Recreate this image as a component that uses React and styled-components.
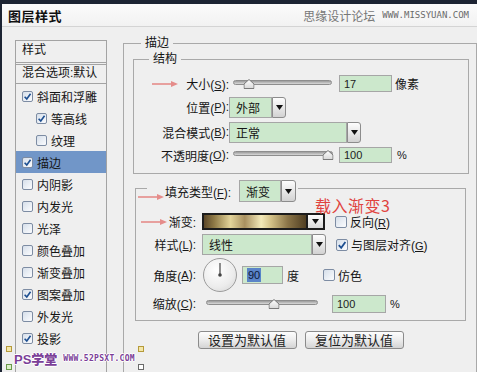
import React from "react";
import styled, { createGlobalStyle } from "styled-components";

const GlobalStyle = createGlobalStyle`
  html, body {
    margin: 0;
    padding: 0;
    background: #efefef;
  }
  body {
    font-family: "Liberation Sans", "Noto Sans CJK SC", sans-serif;
    font-size: 12px;
    color: #151515;
  }
`;

const Window = styled.div`
  position: relative;
  width: 477px;
  height: 372px;
  overflow: hidden;
  box-sizing: border-box;
  border-top: 4px solid #1d2433;
  border-left: 2px solid #1d2433;
  background: #efefef;
`;

const TitleBar = styled.div`
  height: 22px;
  display: flex;
  align-items: center;
  justify-content: space-between;
  padding: 0 8px 0 6px;
  background: linear-gradient(#fbfbfb, #f2f2f2);
  border-bottom: 1px solid #d4d4d4;
`;

const Title = styled.h1`
  margin: 0;
  font-size: 13px;
  font-weight: 700;
  color: #111;
  letter-spacing: 0.5px;
`;

const SiteMark = styled.div`
  display: flex;
  align-items: center;
  gap: 7px;
  color: #777;
  font-size: 12px;
  span {
    font-family: "DejaVu Sans Mono", monospace;
    font-size: 9px;
    color: #6a6a6a;
  }
`;

const Content = styled.div`
  display: flex;
  align-items: flex-start;
`;

const Sidebar = styled.div`
  width: 92px;
  height: 360px;
  margin: 13px 0 0 13px;
  border: 1px solid #a3a3a3;
  box-sizing: border-box;
  flex: none;
`;

const SideHeader = styled.div`
  height: 21px;
  line-height: 19px;
  padding-left: 6px;
  border-bottom: 3px double #a3a3a3;
`;

const SideBlend = styled.div`
  height: 18px;
  line-height: 16px;
  padding-left: 6px;
  border-bottom: 1px solid #a3a3a3;
  margin-bottom: 1px;
  white-space: nowrap;
`;

const SideItem = styled.div`
  height: 22px;
  display: flex;
  align-items: center;
  gap: 4px;
  padding-left: ${(p) => (p.$indent ? 20 : 6)}px;
  background: ${(p) => (p.$active ? "#7196c8" : "transparent")};
  white-space: nowrap;
`;

const Box = styled.span`
  width: ${(p) => p.$size}px;
  height: ${(p) => p.$size}px;
  box-sizing: border-box;
  border: 1px solid #7d8ca3;
  border-radius: 2px;
  background: linear-gradient(135deg, #d6dfea, #fbfcfe);
  display: inline-flex;
  align-items: center;
  justify-content: center;
  flex: none;
  margin-left: ${(p) => p.$ml || 0}px;
`;

const Check = ({ checked, size = 11, ml }) => (
  <Box $size={size} $ml={ml}>
    {checked && (
      <svg width={size - 2} height={size - 2} viewBox="0 0 10 10">
        <path d="M1.8 5.2 L4.2 7.8 L8.4 2" stroke="#1d4f91" strokeWidth="1.8" fill="none" />
      </svg>
    )}
  </Box>
);

const Outer = styled.fieldset`
  margin: 8px 0 0 16px;
  padding: 0 0 40px 9px;
  width: 370px;
  min-width: 0;
  border: 1px solid #a9a9a9;
  box-sizing: border-box;
`;

const Legend = styled.legend`
  margin-left: ${(p) => p.$ml}px;
  padding: 0 4px;
  line-height: 16px;
`;

const Group = styled.fieldset`
  margin: 0 0 0 ${(p) => p.$ml || 0}px;
  padding: 0 0 ${(p) => p.$pb}px 0;
  width: ${(p) => p.$w}px;
  min-width: 0;
  border: 1px solid #a9a9a9;
  box-sizing: border-box;
`;

const FillLegend = styled.legend`
  margin-left: 11px;
  padding: 6px 2px 0 18px;
`;

const LegendRow = styled.div`
  display: flex;
  align-items: center;
  height: 22px;
  gap: 8px;
`;

const Rows = styled.div`
  padding-top: ${(p) => p.$pt}px;
`;

const Row = styled.div`
  display: flex;
  align-items: center;
  height: ${(p) => p.$h}px;
  margin-top: ${(p) => p.$mt || 0}px;
`;

const Label = styled.label`
  width: ${(p) => p.$w}px;
  flex: none;
  display: flex;
  justify-content: flex-end;
  align-items: center;
  gap: ${(p) => p.$gap || 0}px;
  white-space: nowrap;
`;

const Key = styled.u`
  font-size: 11px;
  text-underline-offset: 1px;
`;

const Track = styled.div`
  position: relative;
  width: ${(p) => p.$w}px;
  height: 5px;
  margin: -3px 0 0 ${(p) => p.$ml}px;
  border: 1px solid #8d8d8d;
  border-radius: 3px;
  background: linear-gradient(#9b9b9b, #d9d9d9);
  box-sizing: border-box;
  flex: none;
`;

const ThumbSvg = styled.svg`
  position: absolute;
  top: -2px;
  left: ${(p) => p.$pos}%;
  transform: translateX(-50%);
`;

const Slider = ({ w, ml, pos }) => (
  <Track $w={w} $ml={ml}>
    <ThumbSvg $pos={pos} width="11" height="10" viewBox="0 0 11 10">
      <defs>
        <linearGradient id="tg" x1="0" y1="0" x2="0" y2="1">
          <stop offset="0" stopColor="#ffffff" />
          <stop offset="1" stopColor="#d8d8d8" />
        </linearGradient>
      </defs>
      <polygon points="5.5,0.5 10.5,5 10.5,9.5 0.5,9.5 0.5,5" fill="url(#tg)" stroke="#7a7a7a" />
    </ThumbSvg>
  </Track>
);

const Field = styled.div`
  width: ${(p) => p.$w}px;
  height: ${(p) => p.$h}px;
  margin-left: ${(p) => p.$ml || 0}px;
  border: 1px solid #a6a6a6;
  background: #cce8cc;
  box-sizing: border-box;
  display: flex;
  align-items: center;
  padding-left: 4px;
  font-size: 11px;
  color: #222;
  flex: none;
`;

const Selected = styled.span`
  background: #5a84c8;
  color: #0d1838;
  padding: 0 1px;
  line-height: 14px;
`;

const Unit = styled.span`
  margin-left: ${(p) => p.$ml}px;
  font-size: ${(p) => (p.$latin ? 11 : 12)}px;
`;

const SelectWrap = styled.div`
  display: flex;
  height: ${(p) => p.$h}px;
  margin-left: ${(p) => p.$ml || 0}px;
  flex: none;
`;

const SelectValue = styled.div`
  width: ${(p) => p.$w}px;
  box-sizing: border-box;
  border: 1px solid #a6a6a6;
  background: #cce8cc;
  display: flex;
  align-items: center;
  padding-left: 6px;
`;

const SelectButton = styled.div`
  width: ${(p) => p.$w || 14}px;
  box-sizing: border-box;
  border: 1px solid #8c8c8c;
  border-radius: 0 3px 3px 0;
  background: linear-gradient(#fdfdfd, #d2d2d2);
  display: flex;
  align-items: center;
  justify-content: center;
`;

const Caret = () => (
  <svg width="7" height="5" viewBox="0 0 7 5">
    <polygon points="0,0 7,0 3.5,5" fill="#111" />
  </svg>
);

const Select = ({ w, h = 21, ml, value, btn }) => (
  <SelectWrap $h={h} $ml={ml}>
    <SelectValue $w={w}>{value}</SelectValue>
    <SelectButton $w={btn}>
      <Caret />
    </SelectButton>
  </SelectWrap>
);

const GradientPicker = styled.div`
  display: flex;
  width: 123px;
  height: 17px;
  margin-left: 6px;
  border: 2px solid #1c1c1c;
  box-sizing: border-box;
  flex: none;
`;

const GradientSwatch = styled.div`
  flex: 1;
  background: linear-gradient(
    90deg,
    #5a4628 0%,
    #8f7a46 10%,
    #e3d49a 26%,
    #a89060 40%,
    #f3eab9 56%,
    #d2c086 66%,
    #8b7548 82%,
    #4f3e22 100%
  );
`;

const GradientButton = styled.div`
  width: 15px;
  border-left: 2px solid #1c1c1c;
  background: linear-gradient(#fdfdfd, #d8d8d8);
  display: flex;
  align-items: center;
  justify-content: center;
`;

const Toggle = styled.div`
  display: flex;
  align-items: center;
  gap: 3px;
  margin-left: ${(p) => p.$ml}px;
  white-space: nowrap;
`;

const Dial = styled.div`
  width: 34px;
  height: 34px;
  margin-left: 7px;
  border-radius: 50%;
  border: 1px solid #9c9c9c;
  box-sizing: border-box;
  background: radial-gradient(circle at 40% 35%, #ffffff, #ececec 60%, #d2d2d2);
  flex: none;
`;

const ButtonRow = styled.div`
  width: 331px;
  margin: 10px 0 0 2px;
  display: flex;
  justify-content: center;
  gap: 8px;
`;

const Button = styled.button`
  width: 99px;
  height: 18px;
  padding: 0;
  border: 1px solid #8b8b8b;
  border-radius: 3px;
  background: linear-gradient(#fdfdfd, #ececec 50%, #d4d4d4);
  font-family: "Noto Sans CJK SC", sans-serif;
  font-size: 13px;
  line-height: 16px;
  color: #222;
`;

const ArrowSvg = styled.svg`
  flex: none;
  position: ${(p) => (p.$x != null ? "absolute" : "static")};
  left: ${(p) => p.$x}px;
  top: ${(p) => p.$y}px;
`;

const Arrow = ({ x, y }) => (
  <ArrowSvg $x={x} $y={y} width="26" height="8" viewBox="0 0 26 8">
    <line x1="0" y1="4" x2="20" y2="4" stroke="#e58c8a" strokeWidth="1.6" />
    <polygon points="19,1 26,4 19,7" fill="#e58c8a" />
  </ArrowSvg>
);

const Note = styled.div`
  position: absolute;
  left: 313px;
  top: 193px;
  font-family: "Noto Sans CJK SC", sans-serif;
  font-size: 16px;
  line-height: 16px;
  color: #e0433e;
  letter-spacing: 0.5px;
`;

const Stamp = styled.div`
  position: absolute;
  left: 4px;
  top: 342px;
  width: 138px;
  height: 24px;
  display: flex;
  align-items: center;
  gap: 6px;
  padding-left: 8px;
  box-sizing: border-box;
  font-weight: 700;
  color: #7b3f98;
  text-shadow: -1px 0 #fff, 1px 0 #fff, 0 -1px #fff, 0 1px #fff;
  b {
    font-size: 13px;
  }
  span {
    font-family: "DejaVu Sans Mono", monospace;
    font-size: 8px;
    letter-spacing: 0.3px;
  }
`;

const Corner = styled.i`
  position: absolute;
  width: 4px;
  height: 4px;
  border: 1px solid ${(p) => p.$c};
  left: ${(p) => (p.$r ? "auto" : "0")};
  right: ${(p) => (p.$r ? "0" : "auto")};
  top: ${(p) => (p.$b ? "auto" : "0")};
  bottom: ${(p) => (p.$b ? "0" : "auto")};
  background: ${(p) => p.$bg};
`;

const layers = [
  { name: "斜面和浮雕", checked: true },
  { name: "等高线", checked: true, indent: true },
  { name: "纹理", indent: true },
  { name: "描边", checked: true, active: true },
  { name: "内阴影" },
  { name: "内发光" },
  { name: "光泽" },
  { name: "颜色叠加" },
  { name: "渐变叠加" },
  { name: "图案叠加", checked: true },
  { name: "外发光" },
  { name: "投影", checked: true },
];

export default function App() {
  return (
    <>
      <GlobalStyle />
      <Window>
        <TitleBar>
          <Title>图层样式</Title>
          <SiteMark>
            思缘设计论坛<span>WWW.MISSYUAN.COM</span>
          </SiteMark>
        </TitleBar>
        <Content>
          <Sidebar>
            <SideHeader>样式</SideHeader>
            <SideBlend>混合选项:默认</SideBlend>
            {layers.map((l) => (
              <SideItem key={l.name} $indent={l.indent} $active={l.active}>
                <Check checked={l.checked} />
                {l.name}
              </SideItem>
            ))}
          </Sidebar>

          <Outer>
            <Legend $ml={8}>描边</Legend>
            <Group $w={336} $pb={8}>
              <Legend $ml={15}>结构</Legend>
              <Rows $pt={6}>
                <Row $h={21}>
                  <Label $w={95} $gap={8}>
                    <Arrow />
                    <span>大小(<Key>S</Key>):</span>
                  </Label>
                  <Slider w={99} ml={4} pos={15} />
                  <Field $w={53} $h={17} $ml={7}>17</Field>
                  <Unit $ml={3}>像素</Unit>
                </Row>
                <Row $h={22} $mt={2}>
                  <Label $w={95}>位置(<Key>P</Key>):</Label>
                  <Select w={43} value="外部" />
                </Row>
                <Row $h={22} $mt={3}>
                  <Label $w={95}>混合模式(<Key>B</Key>):</Label>
                  <Select w={118} value="正常" />
                </Row>
                <Row $h={20} $mt={2}>
                  <Label $w={95}>不透明度(<Key>O</Key>):</Label>
                  <Slider w={100} ml={4} pos={96} />
                  <Field $w={53} $h={16} $ml={6}>100</Field>
                  <Unit $ml={5} $latin>%</Unit>
                </Row>
              </Rows>
            </Group>

            <Group $w={331} $ml={2} $pb={7}>
              <FillLegend>
                <LegendRow>
                  <span>填充类型(<Key>F</Key>):</span>
                  <Select w={42} h={22} btn={15} value="渐变" />
                </LegendRow>
              </FillLegend>
              <Rows $pt={11}>
                <Row $h={17}>
                  <Label $w={60} $gap={2}>
                    <Arrow />
                    <span>渐变:</span>
                  </Label>
                  <GradientPicker>
                    <GradientSwatch />
                    <GradientButton>
                      <Caret />
                    </GradientButton>
                  </GradientPicker>
                  <Toggle $ml={10}>
                    <Check size={12} />
                    <span>反向(<Key>R</Key>)</span>
                  </Toggle>
                </Row>
                <Row $h={21} $mt={4}>
                  <Label $w={60}>样式(<Key>L</Key>):</Label>
                  <Select w={110} ml={6} value="线性" />
                  <Toggle $ml={10}>
                    <Check size={12} checked />
                    <span>与图层对齐(<Key>G</Key>)</span>
                  </Toggle>
                </Row>
                <Row $h={36} $mt={2}>
                  <Label $w={60}>角度(<Key>A</Key>):</Label>
                  <Dial>
                    <svg width="32" height="32" viewBox="0 0 32 32">
                      <line x1="16" y1="16" x2="16" y2="4" stroke="#444" strokeWidth="1.2" />
                      <circle cx="16" cy="16" r="1.8" fill="#444" />
                    </svg>
                  </Dial>
                  <Field $w={41} $h={18} $ml={5}>
                    <Selected>90</Selected>
                  </Field>
                  <Unit $ml={4}>度</Unit>
                  <Toggle $ml={24}>
                    <Check size={12} />
                    仿色
                  </Toggle>
                </Row>
                <Row $h={19} $mt={1}>
                  <Label $w={60}>缩放(<Key>C</Key>):</Label>
                  <Slider w={112} ml={10} pos={61} />
                  <Field $w={54} $h={18} $ml={14}>100</Field>
                  <Unit $ml={4} $latin>%</Unit>
                </Row>
              </Rows>
            </Group>

            <ButtonRow>
              <Button>设置为默认值</Button>
              <Button>复位为默认值</Button>
            </ButtonRow>
          </Outer>
        </Content>

        <Arrow x={136} y={189} />
        <Note>载入渐变3</Note>
        <Stamp>
          <Corner $c="#b59a3a" $bg="#f4e7a8" />
          <Corner $c="#b59a3a" $bg="#f4e7a8" $r />
          <Corner $c="#6a9a4a" $bg="#dcefc8" $b />
          <Corner $c="#6a6a6a" $bg="#ffffff" $r $b />
          <b>PS学堂</b>
          <span>WWW.52PSXT.COM</span>
        </Stamp>
      </Window>
    </>
  );
}
